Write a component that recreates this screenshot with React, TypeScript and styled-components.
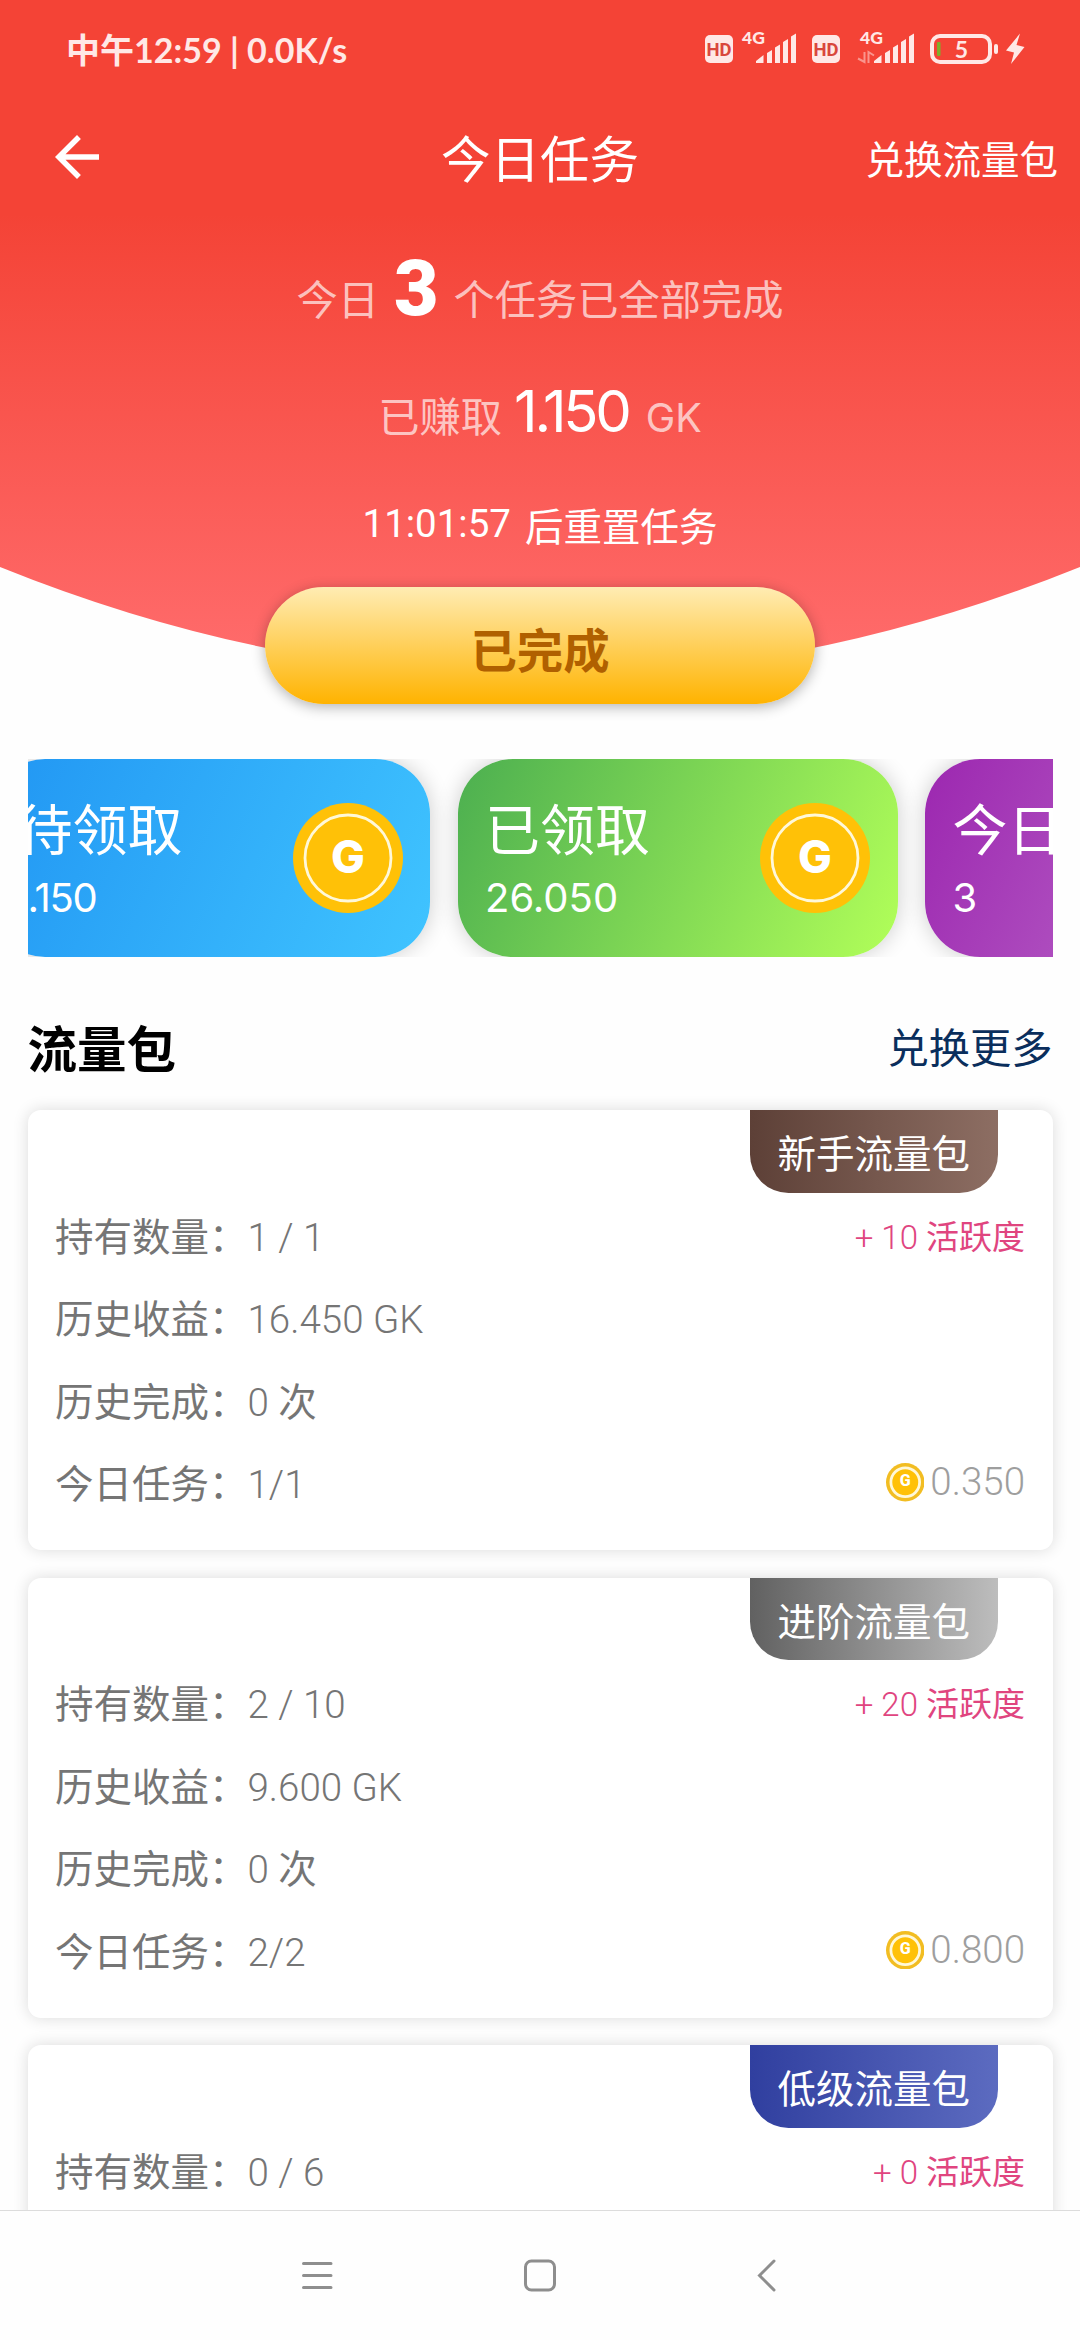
import React from "react";
import styled, { createGlobalStyle } from "styled-components";

const cjk = `"Noto Sans CJK SC", "Noto Sans", sans-serif`;
const roboto = `Roboto, "Noto Sans CJK SC", sans-serif`;
const geometric = `Inter, "Noto Sans CJK SC", sans-serif`;

const GlobalStyle = createGlobalStyle`
  * { box-sizing: border-box; }
  body { margin: 0; background: #fff; }
`;

const Screen = styled.div`
  display: flex;
  flex-direction: column;
  width: 1080px;
  height: 2340px;
  overflow: hidden;
  background: #fefefe;
  font-family: ${roboto};
`;

const Content = styled.main`
  flex: 1;
  min-height: 0;
  overflow: hidden;
`;

const Hero = styled.header`
  height: 676px;
  color: #fff;
  background: linear-gradient(#f44336 214px, #ff6b6b 655px);
  clip-path: path("M0 0H1080V567Q540 785 0 567Z");
`;

const StatusBar = styled.div`
  display: flex;
  align-items: center;
  justify-content: space-between;
  height: 100px;
  padding: 0 55px 0 66px;
  color: #ffe8e6;
`;

const Clock = styled.span`
  font: 700 34px/40px Lato, "Noto Sans CJK SC", sans-serif;
  white-space: pre;
`;

const StatusIcons = styled.svg`
  display: block;
  width: 320px;
  height: 34px;
  margin-top: -2px;
  overflow: visible;
`;

const AppBar = styled.div`
  display: grid;
  grid-template-columns: 1fr auto 1fr;
  align-items: center;
  height: 114px;
  padding: 0 22px;
  font-family: ${cjk};
`;

const BackIcon = styled.svg`
  width: 66px;
  height: 66px;
  margin-left: 22px;
`;

const Title = styled.h1`
  margin: 0;
  font-size: 49.5px;
  font-weight: 400;
  line-height: 66px;
`;

const BarAction = styled.span`
  justify-self: end;
  font-size: 38.5px;
  line-height: 60px;
`;

const Summary = styled.div<{ $height: number; $top: number; $center?: boolean }>`
  display: flex;
  justify-content: center;
  align-items: ${(p) => (p.$center ? "center" : "baseline")};
  height: ${(p) => p.$height}px;
  margin-top: ${(p) => p.$top}px;
  line-height: ${(p) => p.$height}px;
`;

const Faded = styled.span<{ $latin?: boolean }>`
  color: rgba(255, 255, 255, 0.68);
  font-family: ${(p) => (p.$latin ? geometric : cjk)};
  font-size: ${(p) => (p.$latin ? 39.5 : 41.25)}px;
`;

const TaskCount = styled.strong`
  width: 74.5px;
  font-family: ${roboto};
  font-size: 77px;
  font-weight: 900;
  text-align: center;
`;

const Earned = styled.span`
  margin: 0 17px 0 12px;
  font-family: ${geometric};
  font-size: 58px;
  font-weight: 400;
  letter-spacing: -3.2px;
`;

const Countdown = styled.span`
  margin-right: 14px;
  font-size: 38.5px;
`;

const ResetLabel = styled.span`
  font-family: ${cjk};
  font-size: 38.5px;
`;

const DoneButton = styled.button`
  position: relative;
  display: block;
  width: 550px;
  height: 117px;
  margin: -89px auto 0;
  padding: 4px 0 0;
  border: 0;
  border-radius: 58.5px;
  background: linear-gradient(#ffecb3, #ffb300);
  box-shadow: 0 3px 14px rgba(0, 0, 0, 0.3);
  color: #b06000;
  font: 700 46.4px/111px ${cjk};
`;

const Strip = styled.section`
  display: flex;
  justify-content: center;
  width: 1025px;
  height: 197.5px;
  margin: 55px 0 0 27.5px;
  overflow: hidden;
`;

const StripTrack = styled.div`
  display: flex;
  flex: none;
  gap: 27.5px;
  width: 1375px;
  margin-left: 275px;
`;

const StatCard = styled.article<{ $from: string; $to: string }>`
  display: flex;
  flex: none;
  align-items: center;
  justify-content: space-between;
  width: 440px;
  height: 197.5px;
  padding: 0 27.5px;
  border-radius: 55px;
  background: linear-gradient(114.2deg, ${(p) => p.$from}, ${(p) => p.$to});
  box-shadow: 0 0 22px rgba(0, 0, 0, 0.2);
  color: #fff;
`;

const StatText = styled.div`
  display: flex;
  flex-direction: column;
`;

const StatLabel = styled.span`
  font: 400 55px/72px ${cjk};
`;

const StatValue = styled.span<{ $tracking: number; $indent: number }>`
  padding-top: 8px;
  font: 400 40px/56px ${geometric};
  letter-spacing: ${(p) => p.$tracking}px;
  text-indent: ${(p) => p.$indent}px;
`;

const SectionHead = styled.div`
  display: flex;
  align-items: center;
  justify-content: space-between;
  height: 153.5px;
  padding: 0 27.5px;
  font-family: ${cjk};
`;

const SectionTitle = styled.h2`
  margin: 0;
  padding-top: 27px;
  color: #000;
  font-size: 49.5px;
  font-weight: 700;
  line-height: 60px;
`;

const SectionLink = styled.span`
  padding-top: 23px;
  color: #0a2e5c;
  font-size: 41.25px;
  line-height: 60px;
`;

const PackList = styled.section`
  display: flex;
  flex-direction: column;
  gap: 27.5px;
  padding: 0 27.5px;
`;

const PackCard = styled.article`
  display: flex;
  flex-direction: column;
  flex: none;
  height: 440px;
  border-radius: 13px;
  background: #fff;
  box-shadow: 0 0 16px rgba(0, 0, 0, 0.14);
`;

const Tag = styled.span<{ $from: string; $to: string }>`
  align-self: flex-end;
  height: 82.5px;
  margin: 0 55px 4px 0;
  padding: 0 27.5px;
  border-radius: 0 0 38.5px 38.5px;
  background: linear-gradient(90deg, ${(p) => p.$from}, ${(p) => p.$to});
  color: #fff;
  font: 400 38.5px/82.5px ${cjk};
`;

const Row = styled.div`
  display: flex;
  justify-content: space-between;
  height: 82.5px;
  padding: 0 27.5px;
  color: #757575;
  font-size: 38.5px;
  line-height: 82.5px;
`;

const Field = styled.span`
  font-weight: 400;
`;

const Value = styled.span`
  font-weight: 300;
`;

const Activity = styled.span`
  color: #e0457f;
  font-size: 33px;
`;

const Reward = styled.span`
  display: flex;
  align-items: center;
  gap: 6px;
  height: 82.5px;
  margin-top: -3px;
  color: #9e9e9e;
  font-weight: 300;
`;

const CoinSvg = styled.svg<{ $size: number }>`
  flex: none;
  width: ${(p) => p.$size}px;
  height: ${(p) => p.$size}px;
`;

const NavBar = styled.nav`
  display: flex;
  align-items: center;
  justify-content: center;
  gap: 178px;
  height: 130px;
  border-top: 1px solid #dcdcdc;
  background: #fefefe;
`;

const NavIcon = styled.svg`
  width: 48px;
  height: 48px;
  fill: none;
  stroke: #8e8e8e;
  stroke-width: 3;
  stroke-linecap: round;
`;

function Coin({ size, small }: { size: number; small?: boolean }) {
  return (
    <CoinSvg $size={size} viewBox="0 0 110 110">
      <circle cx="55" cy="55" r="55" fill={small ? "#f2bd22" : "#ffc107"} />
      <circle
        cx="55"
        cy="55"
        r={small ? 41 : 43}
        fill="#ffc107"
        stroke="#fff8d8"
        strokeWidth={small ? 8 : 2.8}
      />
      <text
        x="55"
        y={small ? 66 : 70}
        textAnchor="middle"
        fill="#fff"
        fontFamily={small ? "Roboto, sans-serif" : "Inter, sans-serif"}
        fontSize={small ? 46 : 45}
        fontWeight="800"
      >
        G
      </text>
    </CoinSvg>
  );
}

function Signal({ x }: { x: number }) {
  return (
    <g transform={`translate(${x} 0)`}>
      <text x="-14" y="12" fontFamily="Lato, sans-serif" fontWeight="900" fontSize="17.500">
        4G
      </text>
      <path d="M0 31V29L7.5 23V31ZM11 31V21L16 18V31ZM19 31V15.500L24 12.500V31ZM27 31V10L32 7V31ZM35 31V4.500L40 1.500V31Z" />
    </g>
  );
}

function HdBadge({ x }: { x: number }) {
  return (
    <g>
      <rect x={x} y="3" width="28" height="28" rx="5" />
      <text
        x={x + 14}
        y="24"
        textAnchor="middle"
        fontFamily="Roboto, sans-serif"
        fontWeight="700"
        fontSize="18.500"
        fill="#d9473c"
      >
        HD
      </text>
    </g>
  );
}

const stats = [
  { label: "待领取", value: "1.150", tracking: -1.2, indent: -5, from: "#2196f3", to: "#40c4ff" },
  { label: "已领取", value: "26.050", tracking: 0, indent: 0, from: "#4caf50", to: "#b2ff59" },
  { label: "今日任务", value: "3", tracking: 0, indent: 0, from: "#9c27b0", to: "#c681d2" },
];

const packs = [
  { name: "新手流量包", from: "#5d4037", to: "#8d6e63", held: "1 / 1", income: "16.450 GK", today: "1/1", activity: 10, reward: "0.350" },
  { name: "进阶流量包", from: "#616161", to: "#bdbdbd", held: "2 / 10", income: "9.600 GK", today: "2/2", activity: 20, reward: "0.800" },
  { name: "低级流量包", from: "#303f9f", to: "#5c6bc0", held: "0 / 6", income: "", today: "", activity: 0, reward: "" },
];

export default function App() {
  return (
    <Screen>
      <GlobalStyle />
      <Content>
        <Hero>
          <StatusBar>
            <Clock>中午12:59 | 0.0K/s</Clock>
            <StatusIcons viewBox="0 0 320 34" fill="#ffe8e6">
              <HdBadge x={0} />
              <Signal x={51} />
              <HdBadge x={107} />
              <Signal x={169} />
              <path
                d="M159.500 20V30L153 26.500M163.500 31V20L169 23.500"
                fill="none"
                stroke="#ffe8e6"
                strokeWidth="2"
                opacity=".5"
              />
              <rect x="227" y="4" width="58" height="26" rx="8" fill="none" stroke="#ffe8e6" strokeWidth="4" />
              <rect x="232" y="10" width="3.500" height="14" rx="1" fill="#7fae2c" />
              <rect x="289" y="12" width="4" height="10" rx="2" />
              <text x="256.500" y="25.500" textAnchor="middle" fontFamily="Lato, sans-serif" fontWeight="700" fontSize="23">
                5
              </text>
              <path d="M315 1.500L301 18.500L309 20.500L306 32L319.500 15L311.500 13Z" />
            </StatusIcons>
          </StatusBar>
          <AppBar>
            <BackIcon viewBox="0 0 24 24" fill="#fff">
              <path d="M20 11H7.830l5.590-5.590L12 4l-8 8 8 8 1.410-1.410L7.830 13H20v-2z" />
            </BackIcon>
            <Title>今日任务</Title>
            <BarAction>兑换流量包</BarAction>
          </AppBar>
          <Summary $height={100} $top={25}>
            <Faded>今日</Faded>
            <TaskCount>3</TaskCount>
            <Faded>个任务已全部完成</Faded>
          </Summary>
          <Summary $height={80} $top={32}>
            <Faded>已赚取</Faded>
            <Earned>1.150</Earned>
            <Faded $latin>GK</Faded>
          </Summary>
          <Summary $height={60} $top={43} $center>
            <Countdown>11:01:57</Countdown>
            <ResetLabel>后重置任务</ResetLabel>
          </Summary>
        </Hero>
        <DoneButton>已完成</DoneButton>

        <Strip>
          <StripTrack>
            {stats.map((s) => (
              <StatCard key={s.label} $from={s.from} $to={s.to}>
                <StatText>
                  <StatLabel>{s.label}</StatLabel>
                  <StatValue $tracking={s.tracking} $indent={s.indent}>{s.value}</StatValue>
                </StatText>
                <Coin size={110} />
              </StatCard>
            ))}
          </StripTrack>
        </Strip>

        <SectionHead>
          <SectionTitle>流量包</SectionTitle>
          <SectionLink>兑换更多</SectionLink>
        </SectionHead>

        <PackList>
          {packs.map((p) => (
            <PackCard key={p.name}>
              <Tag $from={p.from} $to={p.to}>{p.name}</Tag>
              <Row>
                <Field>持有数量：<Value>{p.held}</Value></Field>
                <Activity><Value>+ {p.activity} </Value>活跃度</Activity>
              </Row>
              {p.income && (
                <>
                  <Row><Field>历史收益：<Value>{p.income}</Value></Field></Row>
                  <Row><Field>历史完成：<Value>0 </Value>次</Field></Row>
                  <Row>
                    <Field>今日任务：<Value>{p.today}</Value></Field>
                    <Reward><Coin size={38.5} small />{p.reward}</Reward>
                  </Row>
                </>
              )}
            </PackCard>
          ))}
        </PackList>
      </Content>

      <NavBar>
        <NavIcon viewBox="0 0 48 48">
          <path d="M13.500 11.500H41M13.500 23.500H41M13.500 35.500H41" />
        </NavIcon>
        <NavIcon viewBox="0 0 48 48">
          <rect x="9.500" y="9" width="29" height="29" rx="6" />
        </NavIcon>
        <NavIcon viewBox="0 0 48 48">
          <path d="M32 9L17.500 23.500L32 38" />
        </NavIcon>
      </NavBar>
    </Screen>
  );
}
